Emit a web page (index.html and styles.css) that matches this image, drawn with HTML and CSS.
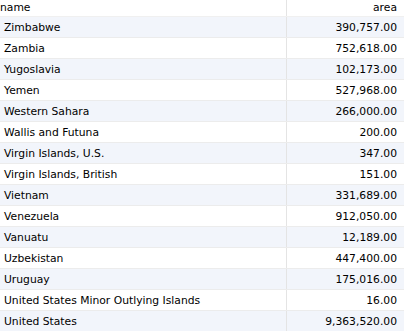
FILE: index.html
```html
<!DOCTYPE html>
<html>
<head>
<meta charset="utf-8">
<link rel="stylesheet" href="styles.css">
</head>
<body>
<table class="grid">
  <colgroup><col class="col-name"><col class="col-area"></colgroup>
  <thead>
    <tr><th class="c-name">name</th><th class="c-area">area</th></tr>
  </thead>
  <tbody>
    <tr><td class="c-name">Zimbabwe</td><td class="c-area">390,757.00</td></tr>
    <tr><td class="c-name">Zambia</td><td class="c-area">752,618.00</td></tr>
    <tr><td class="c-name">Yugoslavia</td><td class="c-area">102,173.00</td></tr>
    <tr><td class="c-name">Yemen</td><td class="c-area">527,968.00</td></tr>
    <tr><td class="c-name">Western Sahara</td><td class="c-area">266,000.00</td></tr>
    <tr><td class="c-name">Wallis and Futuna</td><td class="c-area">200.00</td></tr>
    <tr><td class="c-name">Virgin Islands, U.S.</td><td class="c-area">347.00</td></tr>
    <tr><td class="c-name">Virgin Islands, British</td><td class="c-area">151.00</td></tr>
    <tr><td class="c-name">Vietnam</td><td class="c-area">331,689.00</td></tr>
    <tr><td class="c-name">Venezuela</td><td class="c-area">912,050.00</td></tr>
    <tr><td class="c-name">Vanuatu</td><td class="c-area">12,189.00</td></tr>
    <tr><td class="c-name">Uzbekistan</td><td class="c-area">447,400.00</td></tr>
    <tr><td class="c-name">Uruguay</td><td class="c-area">175,016.00</td></tr>
    <tr><td class="c-name">United States Minor Outlying Islands</td><td class="c-area">16.00</td></tr>
    <tr><td class="c-name">United States</td><td class="c-area">9,363,520.00</td></tr>
  </tbody>
</table>
</body>
</html>
```
FILE: styles.css
```css
html, body {
  margin: 0;
  padding: 0;
  background: #ffffff;
}
body {
  font-family: Tahoma, "DejaVu Sans", Verdana, sans-serif;
  font-size: 10.75px;
  color: #000;
}
.grid {
  border-collapse: collapse;
  width: 404px;
  table-layout: fixed;
}
.col-name {
  width: 286px;
}
.grid th, .grid td {
  padding: 0 7px 0 4px;
  white-space: nowrap;
  overflow: hidden;
  font-weight: normal;
}
.grid th {
  height: 16px;
  line-height: 16px;
  border-bottom: 1px solid #f0f0f0;
}
.grid th.c-name {
  padding-left: 0;
}
.grid td {
  height: 19px;
  line-height: 19px;
  padding-top: 1px;
  border-bottom: 1px solid #ececec;
}
.grid .c-name {
  text-align: left;
  border-right: 1px solid #e4e4e4;
}
.grid .c-area {
  text-align: right;
}
.grid tbody tr:nth-child(odd) td {
  background: #f2f5fb;
}
```
